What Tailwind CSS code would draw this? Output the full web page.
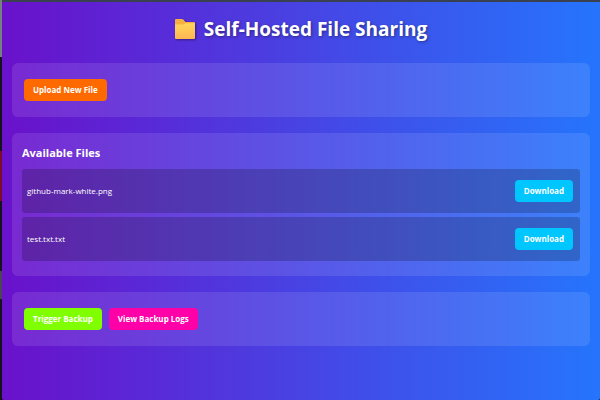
<!DOCTYPE html>
<html lang="en">

<head>
    <meta charset="UTF-8">
    <meta name="viewport" content="width=device-width, initial-scale=1.0">
    <script src="https://cdn.jsdelivr.net/npm/@tailwindcss/browser@4"></script>
    <title>Self-Hosted File Sharing</title>
</head>

<body class="flex min-h-screen bg-[#17131a] font-['Segoe_UI','Open_Sans',sans-serif] text-white">
    <!-- desktop edge -->
    <div class="flex w-[2px] flex-col">
        <div class="h-[57px] bg-[#76807f]"></div>
        <div class="h-[94px] bg-[#17131a]"></div>
        <div class="h-[50px] bg-[#7c0a2c]"></div>
        <div class="h-[70px] bg-[#17131a]"></div>
        <div class="h-[28px] bg-[#4b4653]"></div>
    </div>

    <div class="flex-1 rounded-b-xs border-t-2 border-[#39404f] bg-linear-to-r/srgb from-[#6a11cb] to-[#2575fc] px-[10px]">
        <h1 class="flex items-center justify-center gap-[9px] pt-[13px] pb-5 text-[19px] leading-7 font-bold text-shadow-[1px_1px_3px_rgb(0_0_0/0.4)]">
            <svg class="h-5 w-5 drop-shadow-[1px_1px_1px_rgb(0_0_0/0.4)]" viewBox="0 0 20 20" aria-hidden="true">
                <defs>
                    <linearGradient id="folder" x1="0" y1="0" x2="0" y2="1">
                        <stop offset="0" stop-color="#ffd75a" />
                        <stop offset="1" stop-color="#ffb553" />
                    </linearGradient>
                </defs>
                <path d="M0 1Q0 0 1 0H7Q8 0 8.600.7L10.500 3H19Q20 3 20 4V10H0Z" fill="#f5b041" />
                <path d="M0 5.500H8.500L10.500 4.200H20V19Q20 20 19 20H1Q0 20 0 19Z" fill="url(#folder)" />
            </svg>
            Self-Hosted File Sharing
        </h1>

        <div class="mb-4 flex rounded-md bg-white/10 px-3 py-4">
            <button type="button" class="h-[22px] rounded-sm bg-[#ff6a00] px-[9px] text-[8px] font-bold">Upload New File</button>
        </div>

        <div class="mb-4 rounded-md bg-white/10 px-[10px] pt-3 pb-[15px]">
            <h2 class="mb-2 text-[11px] leading-4 font-bold">Available Files</h2>
            <ul class="flex flex-col gap-1">
                <li class="flex h-11 items-center justify-between rounded-[3px] bg-black/20 pr-[7px] pl-[5px] text-[8px]">
                    <span>github-mark-white.png</span>
                    <button type="button" class="h-[22px] rounded-sm bg-[#00c6ff] px-[9px] font-bold">Download</button>
                </li>
                <li class="flex h-11 items-center justify-between rounded-[3px] bg-black/20 pr-[7px] pl-[5px] text-[8px]">
                    <span>test.txt.txt</span>
                    <button type="button" class="h-[22px] rounded-sm bg-[#00c6ff] px-[9px] font-bold">Download</button>
                </li>
            </ul>
        </div>

        <div class="flex gap-[7px] rounded-md bg-white/10 px-3 py-4">
            <button type="button" class="h-[22px] rounded-sm bg-[#7fff00] px-[9px] text-[8px] font-bold">Trigger Backup</button>
            <button type="button" class="h-[22px] rounded-sm bg-[#ff00a8] px-[9px] text-[8px] font-bold">View Backup Logs</button>
        </div>
    </div>
</body>

</html>
